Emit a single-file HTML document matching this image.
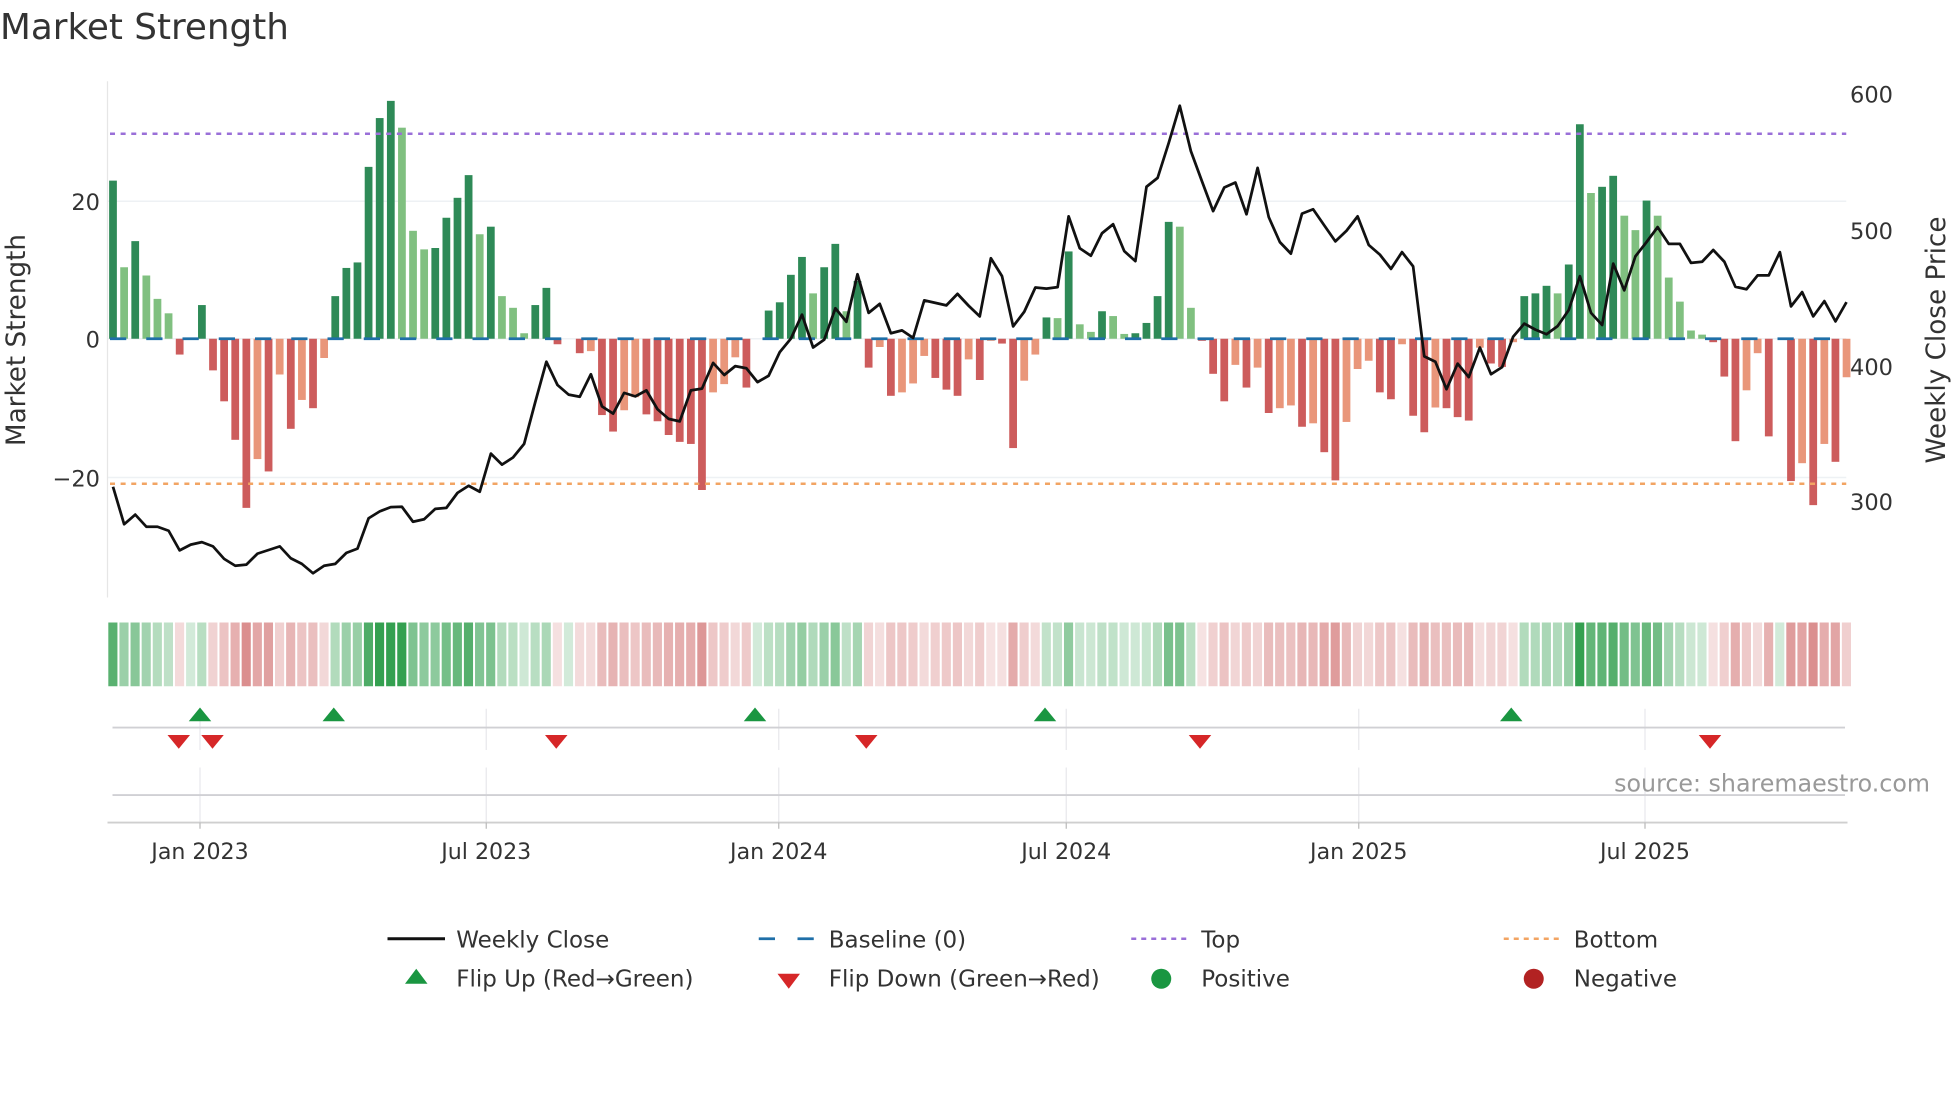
<!DOCTYPE html>
<html><head><meta charset="utf-8"><style>
html,body{margin:0;padding:0;background:#fff;}
svg{display:block;font-family:"DejaVu Sans","Liberation Sans",sans-serif;}
</style></head><body>
<svg id="s" width="1960" height="1102" viewBox="0 0 1568 881.6" xmlns="http://www.w3.org/2000/svg">
<rect x="0" y="0" width="1568" height="881.6" fill="#fff"/>
<text x="0" y="31" font-size="28.6" fill="#333">Market Strength</text>
<!-- grid -->
<line x1="86" y1="161" x2="1477" y2="161" stroke="#eef1f4" stroke-width="1.2"/>
<line x1="86" y1="271" x2="1477" y2="271" stroke="#eef1f4" stroke-width="1.2"/>
<line x1="86" y1="382" x2="1477" y2="382" stroke="#eef1f4" stroke-width="1.2"/>
<line x1="86" y1="65" x2="86" y2="478" stroke="#e6e6e6" stroke-width="1"/>
<g id="bars"></g>
<line x1="88" y1="271" x2="1477" y2="271" stroke="#1f6fa8" stroke-width="2.2" stroke-dasharray="13,16"/>
<line x1="88" y1="107" x2="1477" y2="107" stroke="#9a6fd8" stroke-width="2" stroke-dasharray="4,4.5"/>
<line x1="88" y1="387" x2="1477" y2="387" stroke="#f2a463" stroke-width="2" stroke-dasharray="4,4.5"/>
<polyline id="price" fill="none" stroke="#111" stroke-width="2.2" stroke-linejoin="round"/>
<g font-size="18" fill="#333" text-anchor="end">
<text x="80" y="168">20</text><text x="80" y="278">0</text><text x="80" y="389">−20</text>
</g>
<g font-size="18" fill="#333">
<text x="1480" y="82">600</text><text x="1480" y="191">500</text><text x="1480" y="300">400</text><text x="1480" y="408">300</text>
</g>
<text transform="translate(20,272) rotate(-90)" font-size="21" fill="#333" text-anchor="middle">Market Strength</text>
<text transform="translate(1556,272) rotate(-90)" font-size="21" fill="#333" text-anchor="middle">Weekly Close Price</text>
<g id="heat"></g>
<g stroke="#e8e8ec" stroke-width="1">
<line x1="160" y1="567" x2="160" y2="600"/><line x1="389" y1="567" x2="389" y2="600"/><line x1="623" y1="567" x2="623" y2="600"/><line x1="853" y1="567" x2="853" y2="600"/><line x1="1087" y1="567" x2="1087" y2="600"/><line x1="1316" y1="567" x2="1316" y2="600"/>
<line x1="160" y1="614" x2="160" y2="658"/><line x1="389" y1="614" x2="389" y2="658"/><line x1="623" y1="614" x2="623" y2="658"/><line x1="853" y1="614" x2="853" y2="658"/><line x1="1087" y1="614" x2="1087" y2="658"/><line x1="1316" y1="614" x2="1316" y2="658"/>
</g>
<line x1="90" y1="582" x2="1476" y2="582" stroke="#d0d0d4" stroke-width="1.5"/>
<line x1="90" y1="636" x2="1476" y2="636" stroke="#d0d0d4" stroke-width="1.5"/>
<line x1="86" y1="658" x2="1478" y2="658" stroke="#cfcfcf" stroke-width="1.5"/>
<g stroke="#bbb" stroke-width="1"><line x1="160" y1="658" x2="160" y2="663"/><line x1="389" y1="658" x2="389" y2="663"/><line x1="623" y1="658" x2="623" y2="663"/><line x1="853" y1="658" x2="853" y2="663"/><line x1="1087" y1="658" x2="1087" y2="663"/><line x1="1316" y1="658" x2="1316" y2="663"/></g>
<g id="tri"></g>
<g font-size="17.7" fill="#333" text-anchor="middle">
<text x="160" y="687">Jan 2023</text><text x="389" y="687">Jul 2023</text><text x="623" y="687">Jan 2024</text><text x="853" y="687">Jul 2024</text><text x="1087" y="687">Jan 2025</text><text x="1316" y="687">Jul 2025</text>
</g>
<text x="1544" y="633" font-size="19" fill="#999" text-anchor="end">source: sharemaestro.com</text>
<g font-size="18.4" fill="#333">
<line x1="310" y1="751" x2="356" y2="751" stroke="#111" stroke-width="2.4"/><text x="365" y="758">Weekly Close</text>
<line x1="607" y1="751" x2="651" y2="751" stroke="#1f6fa8" stroke-width="2.2" stroke-dasharray="13,18"/><text x="663" y="758">Baseline (0)</text>
<line x1="905" y1="751" x2="949" y2="751" stroke="#9a6fd8" stroke-width="2" stroke-dasharray="4,4"/><text x="961" y="758">Top</text>
<line x1="1203" y1="751" x2="1247" y2="751" stroke="#f2a463" stroke-width="2" stroke-dasharray="4,4"/><text x="1259" y="758">Bottom</text>
<polygon points="324,787 342,787 333,775" fill="#1a9641"/><text x="365" y="789">Flip Up (Red→Green)</text>
<polygon points="622,779 640,779 631,791" fill="#d62728"/><text x="663" y="789">Flip Down (Green→Red)</text>
<circle cx="929" cy="783" r="8" fill="#1a9641"/><text x="961" y="789">Positive</text>
<circle cx="1227" cy="783" r="8" fill="#b22222"/><text x="1259" y="789">Negative</text>
</g>
</svg>
<script>
var NS="http://www.w3.org/2000/svg";
function el(t,a,p){var e=document.createElementNS(NS,t);for(var k in a)e.setAttribute(k,a[k]);p.appendChild(e);return e;}
var B=[[23,'D'],[10.4,'L'],[14.2,'D'],[9.2,'L'],[5.8,'L'],[3.7,'L'],[-2.3,'R'],[0,'R'],[4.9,'D'],[-4.6,'R'],[-9.1,'R'],[-14.7,'R'],[-24.6,'R'],[-17.5,'S'],[-19.3,'R'],[-5.2,'S'],[-13.1,'R'],[-8.9,'S'],[-10.1,'R'],[-2.8,'S'],
[6.2,'D'],[10.3,'D'],[11.1,'D'],[25,'D'],[32.1,'D'],[34.6,'D'],[30.7,'L'],[15.7,'L'],[13,'L'],[13.2,'D'],[17.6,'D'],[20.5,'D'],[23.8,'D'],[15.2,'L'],[16.3,'D'],[6.2,'L'],[4.5,'L'],[0.8,'L'],[4.9,'D'],[7.4,'D'],
[-0.8,'R'],[0,'R'],[-2.1,'R'],[-1.8,'S'],[-11.1,'R'],[-13.5,'R'],[-10.4,'S'],[-8.5,'S'],[-11,'R'],[-12,'R'],[-14,'R'],[-15,'R'],[-15.3,'R'],[-22,'R'],[-7.8,'S'],[-6.6,'S'],[-2.7,'S'],[-7.1,'R'],[0,'R'],
[4.1,'D'],[5.3,'D'],[9.3,'D'],[11.9,'D'],[6.6,'L'],[10.4,'D'],[13.8,'D'],[4,'L'],[8.4,'D'],
[-4.2,'R'],[-1.2,'S'],[-8.3,'R'],[-7.8,'S'],[-6.5,'S'],[-2.5,'S'],[-5.7,'R'],[-7.4,'R'],[-8.3,'R'],[-3,'S'],[-6,'R'],[-0.3,'S'],[-0.7,'R'],[-15.9,'R'],[-6.1,'S'],[-2.3,'S'],
[3.1,'D'],[3,'L'],[12.7,'D'],[2.1,'L'],[1,'L'],[4,'D'],[3.3,'L'],[0.7,'L'],[0.8,'D'],[2.3,'D'],[6.2,'D'],[17,'D'],[16.3,'L'],[4.5,'L'],
[-0.3,'R'],[-5.1,'R'],[-9.1,'R'],[-3.8,'S'],[-7.1,'R'],[-4.2,'S'],[-10.8,'R'],[-10.1,'S'],[-9.7,'S'],[-12.8,'R'],[-12.3,'S'],[-16.5,'R'],[-20.6,'R'],[-12.1,'S'],[-4.4,'S'],[-3.2,'S'],[-7.8,'R'],[-8.8,'R'],[-0.8,'S'],[-11.2,'R'],[-13.6,'R'],[-10,'S'],[-10.1,'R'],[-11.4,'R'],[-11.9,'R'],[-1.3,'S'],[-3.6,'R'],[-4.1,'R'],[-0.5,'S'],
[6.2,'D'],[6.6,'D'],[7.7,'D'],[6.6,'L'],[10.8,'D'],[31.2,'D'],[21.2,'L'],[22.1,'D'],[23.7,'D'],[17.9,'L'],[15.8,'L'],[20.1,'D'],[17.9,'L'],[8.9,'L'],[5.4,'L'],[1.2,'L'],[0.6,'L'],
[-0.5,'R'],[-5.5,'R'],[-14.9,'R'],[-7.5,'S'],[-2.1,'S'],[-14.2,'R'],[0,'R'],[-20.7,'R'],[-18.1,'S'],[-24.2,'R'],[-15.3,'S'],[-17.9,'R'],[-5.6,'S']];
var C={D:'#2e8a57',L:'#80c080',R:'#cd5c5c',S:'#e9967a'};
var P=[1195,1300,1273,1307,1307,1318,1373,1357,1350,1362,1397,1416,1413,1382,1372,1362,1395,1411,1437,1416,1411,1380,1368,1283,1264,1252,1251,1293,1286,1257,1254,1212,1192,1209,1102,1133,1113,1075,958,845,910,937,943,880,970,990,932,942,925,978,1005,1012,925,
920,848,882,857,863,902,884,818,780,713,805,783,695,733,600,708,683,765,757,778,673,680,687,655,688,718,555,605,746,705,637,640,636,438,527,548,485,460,535,563,355,330,232,128,255,340,423,357,343,432,302,440,510,542,430,418,
463,508,478,438,518,545,585,538,578,830,845,922,850,888,805,880,860,775,738,755,768,745,700,605,708,742,570,645,550,510,468,515,515,568,565,532,565,635,642,603,603,538,690,650,718,675,732,678];
var bars=document.getElementById('bars'),heat=document.getElementById('heat');
var n=B.length,pts=[];
for(var i=0;i<n;i++){
 var x=90.4+8.89*i,v=B[i][0],h=Math.abs(v)*5.5;
 if(h>0.1) el('rect',{x:x-3.1,y:v>0?271-h:271,width:6.2,height:h,fill:C[B[i][1]]},bars);
 var a=Math.min(1,0.22+0.78*Math.abs(v)/30);
 var col=v>=0?'rgba(52,160,80,'+a.toFixed(2)+')':'rgba(205,100,100,'+(a*0.85).toFixed(2)+')';
 el('rect',{x:x-4.45+0.7,y:498,width:7.3,height:51,fill:col},heat);
}
for(var i=0;i<P.length&&i<n;i++){pts.push((90.4+8.89*i).toFixed(1)+','+(P[i]/3.5+48).toFixed(1));}
document.getElementById('price').setAttribute('points',pts.join(' '));
var tri=document.getElementById('tri');
[160,267,604,836,1209].forEach(function(x){el('polygon',{points:(x-9)+',577 '+(x+9)+',577 '+x+',566',fill:'#1a9641'},tri);});
[143,170,445,693,960,1368].forEach(function(x){el('polygon',{points:(x-9)+',588 '+(x+9)+',588 '+x+',599',fill:'#d62728'},tri);});
</script>
</body></html>
